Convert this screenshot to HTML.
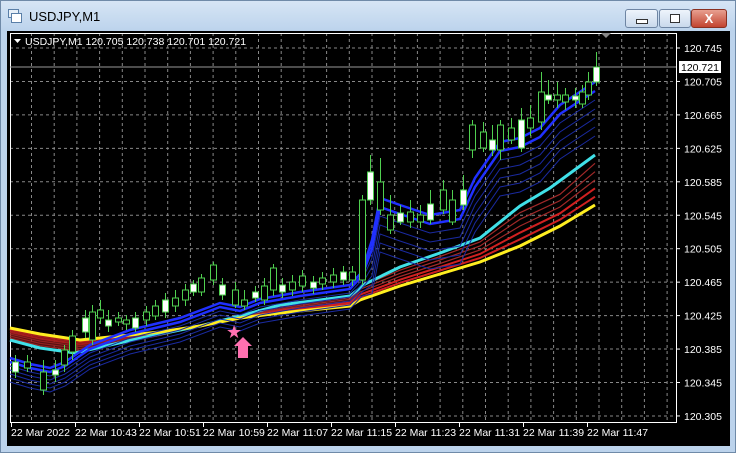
<!DOCTYPE html><html><head><meta charset="utf-8"><style>
body{margin:0;width:736px;height:453px;overflow:hidden;background:#c3d8ee;font-family:"Liberation Sans",sans-serif}
#win{position:absolute;left:0;top:0;width:734px;height:451px;border:1px solid #6f8aa8;background:linear-gradient(#d6e5f5,#bcd3ec 30px,#bcd3ec);}
.title{position:absolute;left:28px;top:8px;font-size:13px;color:#000}
.btn{position:absolute;top:8px;height:17px;border:1px solid #6e85a3;border-radius:3px;background:linear-gradient(#eef4fb,#c9d9ec)}
#chart{position:absolute;left:7px;top:31px;width:723px;height:415px;background:#000}
</style></head><body><div id="win">
<svg style="position:absolute;left:7px;top:8px" width="14" height="14"><rect x="0.5" y="0.5" width="10" height="8" fill="#e8f0f8" stroke="#5a7fa8"/><rect x="3.5" y="4.5" width="10" height="9" fill="#fff" stroke="#5a7fa8"/></svg>
<div class="title">USDJPY,M1</div>
<div class="btn" style="left:624px;width:31px"><div style="position:absolute;left:10px;top:9px;width:10px;height:3px;border:1px solid #333;background:#fff"></div></div>
<div class="btn" style="left:658px;width:30px"><div style="position:absolute;left:10px;top:4px;width:8px;height:7px;border:1px solid #333;background:#fff"></div></div>
<div class="btn" style="left:690px;width:34px;background:linear-gradient(#e8a090,#c24430);border-color:#8a3020;color:#fff;font-weight:bold;font-size:13px;text-align:center;line-height:17px">X</div>
</div>
<div id="chart"></div>
<svg id="s" style="position:absolute;left:0;top:0" width="736" height="453" font-family="Liberation Sans" font-size="10.5"></svg>
<script>
var s='';
var L=10,R=676,T=33,B=422;
for(var x=31.5;x<R;x+=22.7)s+='<line x1="'+x+'" y1="'+T+'" x2="'+x+'" y2="'+B+'" stroke="#888" stroke-dasharray="3,3"/>';
var prices=['120.745','120.705','120.665','120.625','120.585','120.545','120.505','120.465','120.425','120.385','120.345','120.305'];
for(var i=0;i<12;i++){var y=48+i*33.45;s+='<line x1="'+L+'" y1="'+y+'" x2="'+R+'" y2="'+y+'" stroke="#888" stroke-dasharray="3,3"/>';s+='<line x1="'+R+'" y1="'+y+'" x2="'+(R+4)+'" y2="'+y+'" stroke="#fff"/><text x="684" y="'+(y+4)+'" fill="#fff">'+prices[i]+'</text>';}
s+='<rect x="'+(L+.5)+'" y="'+(T+.5)+'" width="'+(R-L)+'" height="'+(B-T)+'" fill="none" stroke="#fff"/>';
s+='<line x1="'+L+'" y1="67" x2="'+R+'" y2="67" stroke="#999"/><rect x="679" y="61" width="42" height="12" fill="#fff"/><text x="681" y="71" fill="#000">120.721</text>';
var t=['22 Mar 2022','22 Mar 10:43','22 Mar 10:51','22 Mar 10:59','22 Mar 11:07','22 Mar 11:15','22 Mar 11:23','22 Mar 11:31','22 Mar 11:39','22 Mar 11:47'];
for(var i=0;i<10;i++){var x=11+i*64;s+='<line x1="'+(x+.5)+'" y1="'+B+'" x2="'+(x+.5)+'" y2="'+(B+5)+'" stroke="#fff"/><text x="'+x+'" y="436" fill="#fff">'+t[i]+'</text>';}
s+='<path d="M601 33h10l-5 5z" fill="#888"/>';
s+='<path d="M14 39h7l-3.5 4z" fill="#fff"/><text x="25" y="45" fill="#fff">USDJPY,M1  120.705 120.738 120.701 120.721</text>';
function pl(p,c,w,o){return '<polyline points="'+p.map(function(a){return a.join(',')}).join(' ')+'" fill="none" stroke="'+c+'" stroke-width="'+w+'" stroke-opacity="'+(o||1)+'"/>';}
var yel=[[10,328],[40,334],[80,340],[120,336],[160,332],[200,326],[240,318],[280,313],[320,309],[350,306],[360,300],[400,286],[440,274],[480,262],[520,246],[560,226],[595,205]];
var cy=[[10,340],[40,348],[75,353],[110,345],[150,336],[200,326],[240,316],[280,305],[320,300],[350,296],[365,284],[400,267],[440,253],[480,238],[520,206],[550,188],[595,155]];
for(var k=1;k<=5;k++){var p=yel.map(function(a,i){var c=cy[i];return [a[0],a[1]+(c[1]-a[1])*k/6]});s+=pl(p,k<3?'#d02020':'#a02828',k<3?2:1.2);}
s+='<path d="M10 330 L80 342 L160 333 L240 318 L240 316 L160 336 L80 352 L10 340Z" fill="#8a1a1a" opacity=".6"/>';
s+=pl(cy,'#40e0e8',3);s+=pl(yel,'#ffee20',3);
var bl=[[10,358],[30,364],[50,368],[65,362],[90,345],[130,330],[180,318],[220,303],[240,307],[260,299],[300,292],[350,285],[362,272],[372,240],[380,198],[400,205],[430,215],[460,210],[475,178],[500,142],[520,138],[540,128],[560,105],[595,82]];
for(var k=0;k<7;k++){var p=bl.map(function(a){return [a[0],a[1]+k*4+(a[0]>370?k*5:0)]});s+=pl(p,k<2?'#2030ff':'#1a2aa0',k<2?2.5:1);}
var c=[[15,362,372,355,378],[27,362,368,355,372],[43,372,390,360,395],[55,370,375,360,382],[64,350,365,345,372],[72,336,352,330,360],[85,318,332,310,338],[92,312,340,305,345],[100,310,318,300,324],[108,320,326,310,332],[118,318,322,312,326],[126,320,324,315,330],[135,318,328,312,332],[146,312,320,306,326],[155,306,316,300,320],[165,300,312,293,318],[175,298,306,290,312],[185,290,300,284,306],[193,284,292,280,296],[201,278,292,274,296],[213,265,280,262,285],[222,285,295,278,300],[235,290,305,282,308],[244,300,306,290,310],[255,292,298,286,302],[264,286,300,278,305],[273,268,290,264,296],[282,285,292,278,298],[292,282,290,275,296],[302,276,286,270,292],[313,282,288,276,294],[322,278,284,272,290],[333,275,282,268,288],[343,272,280,266,285],[352,272,280,266,286],[362,200,280,195,285],[370,172,200,155,205],[380,182,210,158,215],[390,215,230,195,234],[400,213,222,205,225],[410,212,222,200,228],[420,215,222,205,228],[430,204,220,190,224],[443,190,210,180,214],[452,200,222,190,225],[463,190,205,175,210],[472,125,150,120,158],[483,132,148,122,152],[492,140,150,125,156],[500,125,150,120,160],[511,128,140,118,144],[521,120,148,108,152],[530,118,128,105,136],[541,92,122,72,130],[548,95,100,80,104],[557,95,100,82,108],[565,95,102,88,110],[575,96,100,88,108],[582,92,104,85,108],[588,82,95,72,100],[596,67,82,52,86]];
c.forEach(function(a,i){var x=a[0]+.5;s+='<line x1="'+x+'" y1="'+a[3]+'" x2="'+x+'" y2="'+a[4]+'" stroke="#50d050"/>';s+='<rect x="'+(x-3)+'" y="'+a[1]+'" width="6" height="'+Math.max(1,a[2]-a[1])+'" fill="'+(i%3==0?'#fff':'#000')+'" stroke="#50d050"/>';});
s+='<text x="226" y="338" fill="#ff70b0" font-size="18">★</text>';
s+='<path d="M243 337 L252 346 L248 346 L248 358 L238 358 L238 346 L234 346Z" fill="#ff70b0"/>';
document.getElementById('s').innerHTML=s;
</script></body></html>
